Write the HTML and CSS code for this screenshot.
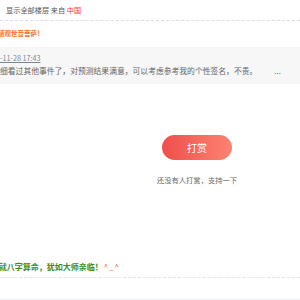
FILE: index.html
```html
<!DOCTYPE html>
<html lang="zh-CN">
<head>
<meta charset="UTF-8">
<title>帖子</title>
<link rel="stylesheet" href="styles.css">
</head>
<body>

<!-- 楼层信息 -->
<div class="floor-info">
  显示全部楼层 <span class="from">来自</span> <span class="area">中国</span>
</div>

<div class="post">
  <p class="greet">感观世音菩萨！</p>

  <!-- 引用 -->
  <div class="quote">
    <p class="quote-date">2017-11-28 17:43</p>
    <p class="quote-text">仔细看过其他事件了，对预测结果满意，可以考虑参考我的个性签名，不贵。<span class="more">...</span></p>
  </div>

  <!-- 打赏 -->
  <div class="reward">
    <div class="reward-btn">打赏</div>
    <p class="reward-tip">还没有人打赏，支持一下</p>
  </div>

  <p class="sign">就八字算命，犹如大师亲临！<span class="smile">^_^</span></p>
</div>

<div class="bottom-bar"></div>

</body>
</html>
```

FILE: styles.css
```css
body {
  margin: 0;
  font-family: "Noto Sans CJK SC", "Noto Sans", sans-serif;
  background: #fff;
  color: #666;
  width: 300px;
  height: 300px;
  overflow: hidden;
}

p { margin: 0; }

/* 楼层信息 */
.floor-info {
  height: 20px;
  line-height: 20px;
  padding-left: 6px;
  font-size: 7.2px;
  color: #555;
  border-bottom: 1px dashed #ddd;
}
.floor-info .area { color: #f33; }

/* 内容 */
.greet {
  margin: 5px 0 0 -2px;
  line-height: 14px;
  font-size: 6.5px;
  font-weight: bold;
  color: #f6711f;
  white-space: nowrap;
}

.quote {
  margin-top: 7px;
  height: 37px;
  padding-top: 4px;
  box-sizing: border-box;
  background: #f7f7f7;
  white-space: nowrap;
}
.quote-date {
  margin-left: -16px;
  line-height: 14px;
  font-size: 7.2px;
  color: #7b8592;
  text-decoration: underline;
}
.quote-text {
  margin-left: -7.8px;
  line-height: 12px;
  font-size: 7.8px;
  color: #666;
}
.quote-text .more { margin-left: 17px; }

/* 打赏 */
.reward {
  margin-top: 49px;
  padding-left: 94px;
  text-align: center;
}
.reward-btn {
  display: inline-block;
  width: 70px;
  height: 25px;
  line-height: 25px;
  border-radius: 13px;
  background: linear-gradient(to right, #ef4f4c, #fd8272);
  color: #fff;
  font-size: 10px;
}
.reward-tip {
  margin-top: 14px;
  line-height: 12px;
  font-size: 7.3px;
  color: #666;
}

/* 签名 */
.sign {
  margin: 74px 0 0 -1.3px;
  line-height: 14px;
  padding-bottom: 3px;
  font-size: 8px;
  font-weight: bold;
  color: #3b8d1d;
  border-bottom: 1px dashed #e3e3e3;
  white-space: nowrap;
}
.sign .smile {
  margin-left: 1px;
  color: #f46b6b;
  font-weight: normal;
  letter-spacing: 1px;
}

.bottom-bar {
  margin-top: 21px;
  height: 10px;
  background: #e9eef3;
}
```
